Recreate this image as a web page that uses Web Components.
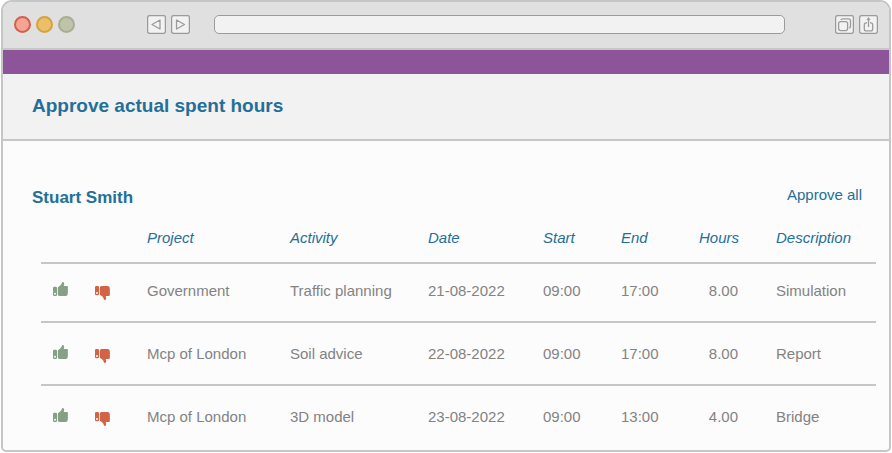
<!DOCTYPE html>
<html lang="en">
<head>
<meta charset="utf-8">
<meta name="viewport" content="width=device-width, initial-scale=1">
<title>Approve actual spent hours</title>
<style>
body {
  margin: 0;
  background: #fff;
  font-family: "Liberation Sans", Arial, Helvetica, sans-serif;
  font-size: 15px;
  line-height: 18px;
  color: #838383;
  --line: #c6c6c6;
  --blue: #246f98;
}
</style>
</head>
<body>

<browser-frame>
  <page-header>Approve actual spent hours</page-header>
  <hours-sheet>
    <span slot="name">Stuart Smith</span>
    <hours-table></hours-table>
  </hours-sheet>
</browser-frame>

<script>
class BrowserFrame extends HTMLElement {

    constructor() {
        super();
        this.attachShadow({mode: "open"}).innerHTML = `
        <style>
:host {
  display: flex;
  flex-direction: column;
  box-sizing: border-box;
  min-height: calc(100vh - 1px);
  margin: 0 1px 1px 1px;
  border: 2px solid var(--line);
  border-radius: 11px 11px 5px 5px;
  overflow: hidden;
  background: #fcfcfc;
}

.bar {
  display: flex;
  align-items: center;
  padding: 13px 11px 14px;
  background: #e0e0e0;
  border-bottom: 2px solid #c8c8c5;
}

.lights, .buttons {
  display: flex;
  gap: 5px;
}

.light {
  box-sizing: border-box;
  width: 17px;
  height: 17px;
  border: 2px solid;
  border-radius: 50%;
}

.red { background: #f6a394; border-color: #d2614a; }
.yellow { background: #ebc06a; border-color: #d5a33c; }
.green { background: #bfc3a8; border-color: #a8ad93; }

.nav { margin: 0 24px 0 72px; }
.tools { margin-left: 50px; }

button {
  width: 19px;
  height: 19px;
  padding: 0;
  border: 0;
  background: none;
}

svg {
  display: block;
  fill: none;
  stroke: #9b9b9b;
  stroke-width: 1.3;
}

input {
  flex: 1;
  min-width: 0;
  box-sizing: border-box;
  height: 19px;
  padding: 0 8px;
  border: 1px solid #9b9b9b;
  border-radius: 5px;
  background: #f2f2f2;
  font: inherit;
}

.strip {
  height: 24px;
  background: #8e5499;
}
        </style>

        <div class="bar">
            <div class="lights">
                <span class="light red"></span>
                <span class="light yellow"></span>
                <span class="light green"></span>
            </div>
            <div class="buttons nav">
                <button aria-label="Back">
                    <svg width="19" height="19" viewBox="0 0 19 19">
                        <rect x=".6" y=".6" width="17.8" height="17.8" rx="2" fill="#f2f2f2"/>
                        <path d="M13 5v9l-8-4.5z" stroke-linejoin="round"/>
                    </svg>
                </button>
                <button aria-label="Forward">
                    <svg width="19" height="19" viewBox="0 0 19 19">
                        <rect x=".6" y=".6" width="17.8" height="17.8" rx="2" fill="#f2f2f2"/>
                        <path d="M5.5 5v9l8-4.5z" stroke-linejoin="round"/>
                    </svg>
                </button>
            </div>
            <input type="text" aria-label="Address">
            <div class="buttons tools">
                <button aria-label="Windows">
                    <svg width="19" height="19" viewBox="0 0 19 19">
                        <rect x=".6" y=".6" width="17.8" height="17.8" rx="2" fill="#f2f2f2"/>
                        <rect x="3.6" y="6.6" width="9" height="9" rx="2"/>
                        <path d="M5.9 5.2q.3-1.4 1.8-1.4h5.8q2 0 2 2v5.4q0 1.6-1.4 1.9"/>
                    </svg>
                </button>
                <button aria-label="Share">
                    <svg width="19" height="19" viewBox="0 0 19 19">
                        <rect x=".6" y=".6" width="17.8" height="17.8" rx="2" fill="#f2f2f2"/>
                        <path d="M8 7.8h-.8q-1.9 0-1.9 1.9v4.2q0 1.9 1.9 1.9h4.6q1.9 0 1.9-1.9v-4.2q0-1.9-1.9-1.9h-.8M9.5 12v-8"/>
                        <path d="M9.5 2.5l1.6 2.3h-3.2z" fill="#9b9b9b" stroke-width=".6"/>
                    </svg>
                </button>
            </div>
        </div>
        <div class="strip"></div>
        <slot></slot>
        `;
    }
}

customElements.define("browser-frame", BrowserFrame);


class PageHeader extends HTMLElement {

    constructor() {
        super();
        this.attachShadow({mode: "open"}).innerHTML = `
        <style>
:host {
  display: block;
  padding: 20px 29px 21px;
  background: #f2f2f2;
  border-bottom: 2px solid var(--line);
}

h1 {
  margin: 0;
  font-size: 19px;
  line-height: 24px;
  color: var(--blue);
}
        </style>
        <h1><slot></slot></h1>
        `;
    }
}

customElements.define("page-header", PageHeader);


class HoursSheet extends HTMLElement {

    constructor() {
        super();
        this.attachShadow({mode: "open"}).innerHTML = `
        <style>
:host {
  display: block;
  padding: 44px 13px 0 29px;
}

.top {
  display: flex;
  justify-content: space-between;
  align-items: flex-start;
  padding: 0 14px 0 0;
  color: var(--blue);
}

h2 {
  margin: 3px 0 0;
  font-size: 17px;
  line-height: 20px;
}

button {
  padding: 0;
  border: 0;
  background: none;
  font: inherit;
  line-height: 20px;
  color: inherit;
  cursor: pointer;
}

.rows { margin-left: 9px; }
        </style>
        <div class="top">
            <h2><slot name="name"></slot></h2>
            <button>Approve all</button>
        </div>
        <div class="rows"><slot></slot></div>
        `;
    }
}

customElements.define("hours-sheet", HoursSheet);


class ThumbButton extends HTMLElement {

    constructor() {
        super();
        this.attachShadow({mode: "open"});
    }

    connectedCallback() {
        const down = this.hasAttribute("down");
        // same hand for both, flipped and dropped for the rejecting one
        this.shadowRoot.innerHTML = `
        <style>
:host { display: block; }

button {
  display: block;
  padding: 0;
  border: 0;
  background: none;
  cursor: pointer;
}

svg { display: block; }
        </style>
        <button aria-label="${down ? "Reject" : "Approve"}">
            <svg width="15" height="18" viewBox="0 0 15 18" fill="${down ? "#d26347" : "#85a085"}">
                <path fill-rule="evenodd" d="M1.2 4.8h1.6q1.2 0 1.2 1.2v6.8q0 1.2-1.2 1.2h-1.6q-1.2 0-1.2-1.2v-6.8q0-1.2 1.2-1.2zM2 10.8a1 1 0 1 0 0 2a1 1 0 1 0 0-2z" ${down ? 'transform="translate(0 -.8)"' : ""}/>
                <path ${down ? 'transform="matrix(1 0 0 -1 0 18)"' : ""} d="M4.8 6q0-.9.8-1.3q1.8-.9 2.7-2.4l.6-1.6q.2-.7.9-.7q1.4 0 1.4 1.8q0 1-.5 2.3h3q1.3 0 1.3 1.3q0 .7-.4 1.1q.4.4.4 1.1t-.4 1.1q.4.4.4 1.1t-.4 1.1q.3.4.2 1.1q-.2 2-2.2 2h-6q-1.8 0-1.8-1.8z"/>
            </svg>
        </button>
        `;
    }
}

customElements.define("thumb-button", ThumbButton);


class HoursTable extends HTMLElement {

    constructor() {
        super();
        this.attachShadow({mode: "open"});
    }

    set entries(entries) {
        this._entries = entries;
        this.render();
    }

    render() {
        this.shadowRoot.innerHTML = `
        <style>
:host { display: block; }

table {
  width: 100%;
  table-layout: fixed;
  border-spacing: 0;
}

th, td {
  padding: 22px 0 21px;
  text-align: left;
  white-space: nowrap;
  border-bottom: 2px solid var(--line);
}

th {
  padding: 21px 0 15px;
  font-weight: normal;
  font-style: italic;
  color: var(--blue);
}

tbody tr:first-child td { padding-top: 18px; }
tbody tr:last-child td { border-bottom: 0; }

td:first-child { padding-left: 12px; }

.hours {
  text-align: right;
  padding-right: 38px;
}

.icon { width: 54px; }
.reject { width: 52px; }
.project { width: 143px; }
.activity { width: 138px; }
.date { width: 115px; }
.time { width: 78px; }
.amount { width: 77px; }
.description { width: 100px; }
        </style>
        <table>
            <colgroup>
                <col class="icon"><col class="reject"><col class="project"><col class="activity"><col class="date">
                <col class="time"><col class="time"><col class="amount"><col class="description">
            </colgroup>
            <thead>
                <tr>
                    <th></th><th></th>
                    <th>Project</th><th>Activity</th><th>Date</th><th>Start</th><th>End</th>
                    <th class="hours">Hours</th><th>Description</th>
                </tr>
            </thead>
            <tbody>
                ${this._entries.map(entry => `
                <tr>
                    <td><thumb-button></thumb-button></td>
                    <td><thumb-button down></thumb-button></td>
                    <td>${entry.project}</td>
                    <td>${entry.activity}</td>
                    <td>${entry.date}</td>
                    <td>${entry.start}</td>
                    <td>${entry.end}</td>
                    <td class="hours">${entry.hours}</td>
                    <td>${entry.description}</td>
                </tr>`).join("")}
            </tbody>
        </table>
        `;
    }
}

customElements.define("hours-table", HoursTable);


document.querySelector("hours-table").entries = [
    {project: "Government", activity: "Traffic planning", date: "21-08-2022", start: "09:00", end: "17:00", hours: "8.00", description: "Simulation"},
    {project: "Mcp of London", activity: "Soil advice", date: "22-08-2022", start: "09:00", end: "17:00", hours: "8.00", description: "Report"},
    {project: "Mcp of London", activity: "3D model", date: "23-08-2022", start: "09:00", end: "13:00", hours: "4.00", description: "Bridge"}
];
</script>
</body>
</html>
